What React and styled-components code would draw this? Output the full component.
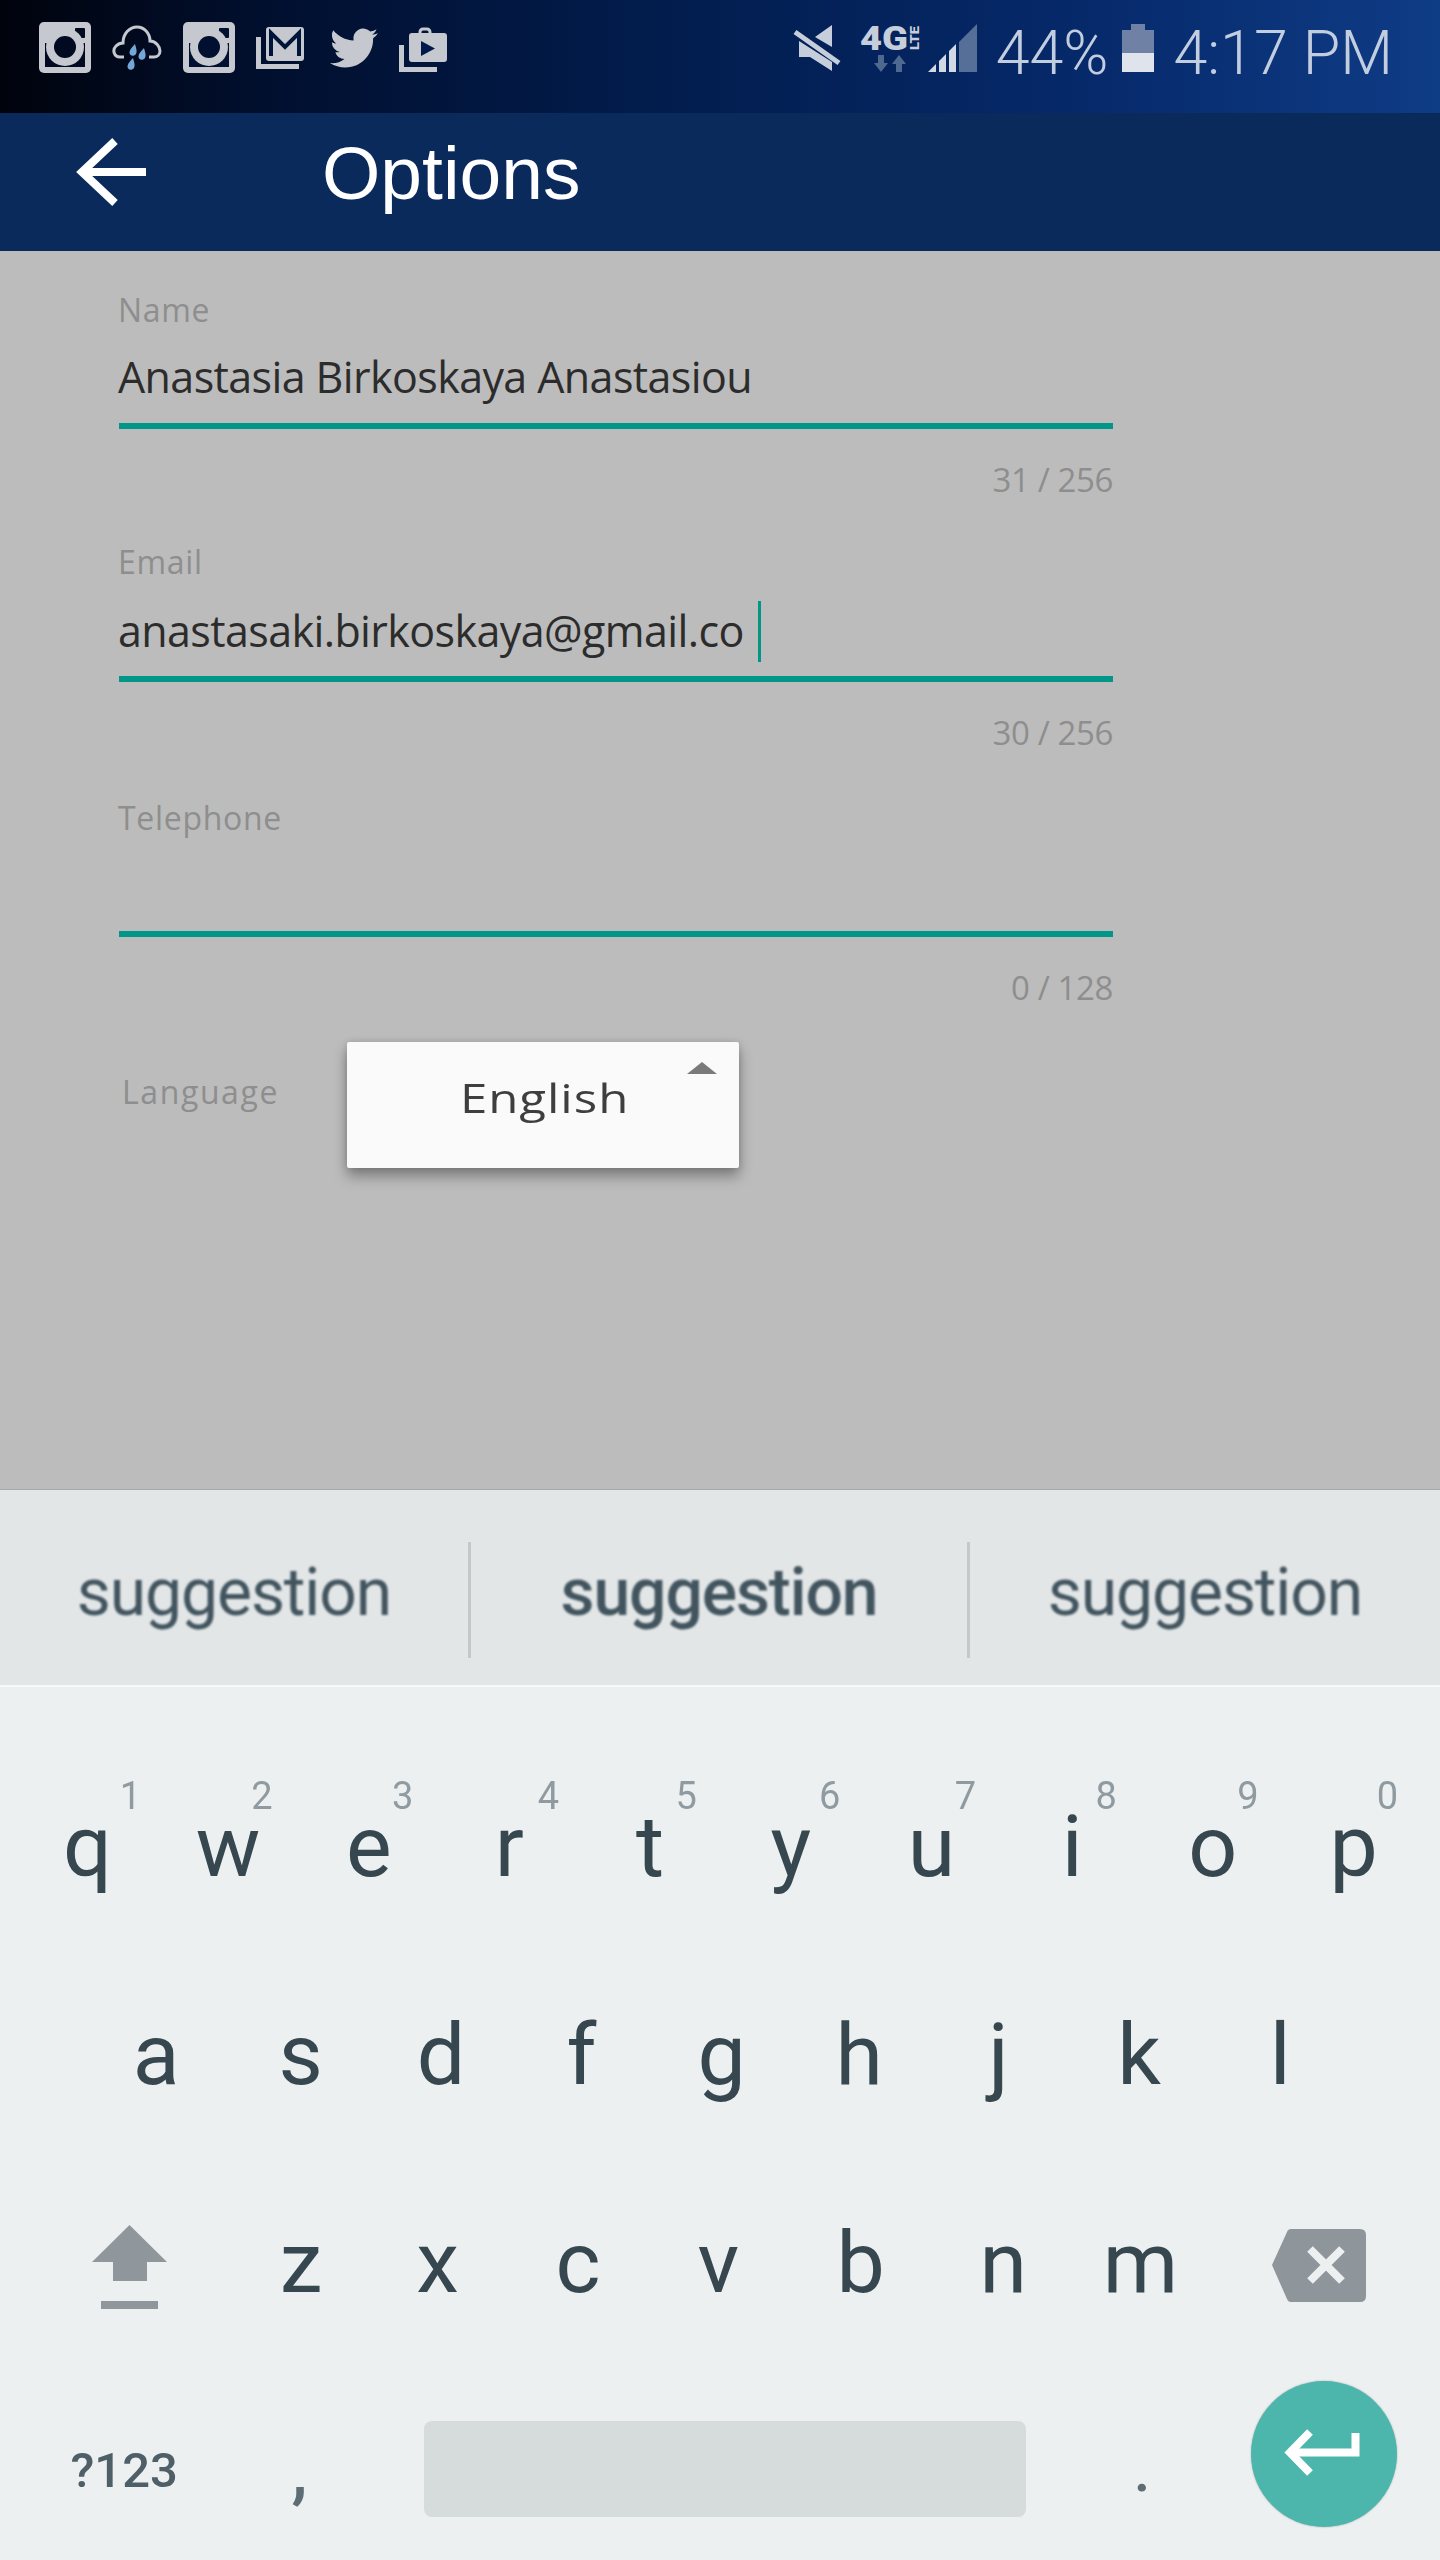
import React from "react";
import styled, { createGlobalStyle } from "styled-components";

const Global = createGlobalStyle`
  html, body { margin: 0; padding: 0; background: #ecf0f1; }
  * { box-sizing: border-box; }
`;

const Page = styled.div`
  width: 1440px;
  height: 2560px;
  overflow: hidden;
  display: flex;
  flex-direction: column;
`;

const StatusBar = styled.div`
  flex: none;
  height: 113px;
  display: flex;
  justify-content: space-between;
  padding: 22px 47px 0 39px;
  background: linear-gradient(90deg, #00030c 0%, #010f2e 18%, #021c4c 45%, #06296a 75%, #0f3c86 100%);
`;
const IconGroup = styled.div`
  display: flex;
  align-items: flex-start;
  gap: ${(p) => p.$gap}px;
`;
const Ico = styled.svg`
  display: block;
  flex: none;
  margin-top: ${(p) => p.$top || 0}px;
  margin-left: ${(p) => p.$left || 0}px;
`;
const StatusText = styled.span`
  font-family: Roboto, "Liberation Sans", sans-serif;
  font-weight: 300;
  font-size: 61px;
  line-height: 70px;
  margin-top: -4px;
  color: #c3cde0;
  white-space: nowrap;
  margin-left: ${(p) => p.$left || 0}px;
`;

const Toolbar = styled.div`
  flex: none;
  height: 138px;
  display: flex;
  align-items: center;
  padding-left: 74px;
  background: #0a2a5c;
`;
const Title = styled.h1`
  margin: 0 0 19px 176px;
  font-family: "Liberation Sans", Arial, sans-serif;
  font-weight: 400;
  font-size: 75px;
  line-height: 80px;
  color: #fff;
`;

const Main = styled.main`
  flex: none;
  height: 1239px;
  background: #bcbcbc;
  border-bottom: 1px solid #a8a9a9;
  padding: 39px 0 0 119px;
`;
const Field = styled.div`
  width: 994px;
  margin-top: ${(p) => p.$top || 0}px;
`;
const Label = styled.div`
  margin-left: -1px;
  font-family: "Open Sans", sans-serif;
  font-size: 32px;
  line-height: 40px;
  letter-spacing: 0.7px;
  color: #8e8e8e;
`;
const ValueRow = styled.div`
  height: 60px;
  margin-top: ${(p) => p.$top}px;
  display: flex;
  align-items: center;
`;
const Value = styled.span`
  margin-left: -1px;
  font-family: "Open Sans", sans-serif;
  font-size: 43px;
  line-height: 60px;
  letter-spacing: -0.6px;
  color: #2c2c2c;
  white-space: nowrap;
`;
const Caret = styled.span`
  width: 3px;
  height: 61px;
  margin-left: 14px;
  background: #009688;
`;
const Underline = styled.div`
  height: 6px;
  margin-top: ${(p) => p.$top}px;
  background: #009688;
`;
const Counter = styled.div`
  margin-top: 31px;
  font-family: "Open Sans", sans-serif;
  font-size: 33px;
  line-height: 40px;
  letter-spacing: -0.4px;
  color: #8e8e8e;
  text-align: right;
`;
const LanguageRow = styled.div`
  margin-top: 34px;
  padding-left: 3px;
  display: flex;
  align-items: flex-start;
`;
const LanguageLabel = styled(Label)`
  margin-left: 0;
  width: 225px;
  margin-top: 30px;
  letter-spacing: 1.6px;
`;
const Dropdown = styled.div`
  position: relative;
  width: 392px;
  height: 126px;
  border-radius: 2px;
  background: #fafafa;
  box-shadow: 0 8px 14px rgba(0, 0, 0, 0.35), 0 0 6px rgba(0, 0, 0, 0.12);
  padding-left: 3px;
  text-align: center;
  font-family: "Open Sans", sans-serif;
  font-size: 41px;
  line-height: 111px;
  color: #3e3e3e;
`;
const DropdownText = styled.span`
  display: inline-block;
  transform: scaleX(1.2);
  letter-spacing: 0.8px;
`;
const Triangle = styled.span`
  position: absolute;
  top: 20px;
  right: 22px;
  width: 0;
  height: 0;
  border-left: 15px solid transparent;
  border-right: 15px solid transparent;
  border-bottom: 12px solid #7a7a7a;
`;

const Suggestions = styled.div`
  flex: none;
  height: 197px;
  padding-top: 24px;
  display: flex;
  align-items: center;
  background: #e3e6e7;
  border-bottom: 2px solid #f8f9f9;
`;
const Suggestion = styled.div`
  flex: ${(p) => p.$w}px 0 0;
  padding-bottom: 14px;
  text-align: center;
  font-family: Roboto, "Liberation Sans", sans-serif;
  font-size: 66px;
  letter-spacing: -1.1px;
  font-weight: ${(p) => (p.$bold ? 500 : 400)};
  line-height: 116px;
  color: #42555f;
  filter: blur(1px);
`;
const Divider = styled.div`
  width: 3px;
  height: 116px;
  background: #c4c8c9;
`;

const Keyboard = styled.div`
  flex: none;
  height: 873px;
  overflow: hidden;
  background: #ecf0f1;
  padding-top: 56px;
`;
const Row = styled.div`
  display: flex;
  align-items: flex-start;
  height: 208px;
  padding-left: ${(p) => p.$pad}px;
  filter: blur(0.6px);
`;
const Key = styled.div`
  position: relative;
  flex: none;
  width: ${(p) => p.$w || 140.4}px;
  margin-left: ${(p) => p.$left || 0}px;
  text-align: center;
  font-family: Roboto, "Liberation Sans", sans-serif;
  font-weight: 400;
  font-size: 86px;
  line-height: 208px;
  height: 208px;
  color: #37474f;
`;
const Hint = styled.span`
  position: absolute;
  top: 34px;
  left: calc(50% + ${(p) => p.$dx}px);
  transform: translateX(-50%);
  font-size: 38px;
  line-height: 39px;
  color: #8f9ba1;
`;
const IconKey = styled.div`
  flex: none;
  margin-top: ${(p) => p.$top}px;
  margin-left: ${(p) => p.$left}px;
`;
const SymbolKey = styled(Key)`
  font-size: 49px;
  font-weight: 500;
  color: #4f5f68;
`;
const PunctKey = styled(Key)`
  font-size: ${(p) => p.$size}px;
  font-weight: 500;
  color: #5d6d75;
`;
const SpaceKey = styled.div`
  flex: none;
  width: 602px;
  height: 96px;
  margin: 54px 0 0 54px;
  border-radius: 8px;
  background: #d6dbdb;
`;
const EnterKey = styled.div`
  flex: none;
  width: 146px;
  height: 146px;
  margin: 14px 0 0 39px;
  border-radius: 50%;
  background: #4db6ac;
  box-shadow: 0 0 2px rgba(0, 0, 0, 0.3);
`;

const IG = "#c5c8cf";
const Insta = ({ dark }) => (
  <Ico width="52" height="51" viewBox="0 0 52 51">
    <rect width="52" height="51" rx="5" fill={IG} />
    <rect x="36" y="6" width="10" height="10" rx="1" fill={dark} />
    <rect x="6" y="21" width="40" height="24" fill={dark} />
    <circle cx="26" cy="25" r="19" fill={IG} />
    <circle cx="26" cy="25" r="11" fill={dark} />
  </Ico>
);
const Drop = ({ x, y }) => (
  <path d={`M${x + 2} ${y - 7}C${x + 3} ${y - 3} ${x + 4.5} ${y} ${x + 3} ${y + 3}C${x + 1} ${y + 6} ${x - 4} ${y + 5} ${x - 3.5} ${y + 1}C${x - 3} ${y - 2} ${x} ${y - 5} ${x + 2} ${y - 7}Z`} fill="#72a7d6" />
);

const dim = "#4f6890";
const keys1 = [["q", "1", 43], ["w", "2", 34], ["e", "3", 34], ["r", "4", 39], ["t", "5", 36], ["y", "6", 39], ["u", "7", 34], ["i", "8", 34], ["o", "9", 35], ["p", "0", 34]];
const keys2 = [["a", 0], ["s", 4], ["d", 0], ["f", 0], ["g", 0], ["h", -3], ["j", -1], ["k", 0], ["l", 1]];
const keys3 = [["x", -4], ["c", 0], ["v", 0], ["b", 2], ["n", 2], ["m", -3]];

export default function App() {
  return (
    <Page>
      <Global />
      <StatusBar>
        <IconGroup $gap={21}>
          <Insta dark="#010a20" />
          <Ico width="50" height="48" viewBox="0 0 50 48" $top={3}>
            <path d="M12 32H8C2 32 0 25 4 21C6 19 8 18 11 18C11 8 18 2 25 2C32 2 38 8 38 16C44 16 48 22 48 26C48 30 45 32 42 32H37" fill="none" stroke={IG} strokeWidth="3" />
            <Drop x={21} y={26} />
            <Drop x={30} y={30} />
            <Drop x={19} y={40} />
          </Ico>
          <Insta dark="#011031" />
          <Ico width="48" height="42" viewBox="0 0 48 42" $top={5}>
            <rect x="10" width="38" height="34" rx="3" fill={IG} />
            <path d="M15 29V6L29 20L43 6V29" fill="none" stroke="#01143a" strokeWidth="4" />
            <path d="M2.5 10V39.5H43" fill="none" stroke={IG} strokeWidth="5" />
          </Ico>
          <Ico width="48" height="48" viewBox="0 0 24 24" $top={2} $left={5}>
            <path fill={IG} d="M23.953 4.57a10 10 0 01-2.825.775 4.958 4.958 0 002.163-2.723c-.951.555-2.005.959-3.127 1.184a4.92 4.92 0 00-8.384 4.482C7.69 8.095 4.067 6.13 1.64 3.162a4.822 4.822 0 00-.666 2.475c0 1.71.87 3.213 2.188 4.096a4.904 4.904 0 01-2.228-.616v.06a4.923 4.923 0 003.946 4.827 4.996 4.996 0 01-2.212.085 4.936 4.936 0 004.604 3.417 9.867 9.867 0 01-6.102 2.105c-.39 0-.779-.023-1.17-.067a13.995 13.995 0 007.557 2.209c9.053 0 13.998-7.496 13.998-13.985 0-.21 0-.42-.015-.63A9.935 9.935 0 0024 4.59z" />
          </Ico>
          <Ico width="48" height="45" viewBox="0 0 48 45" $top={5}>
            <path d="M21 7V5A3 3 0 0 1 24 2H28A3 3 0 0 1 31 5V7" fill="none" stroke={IG} strokeWidth="3" />
            <rect x="10" y="6" width="38" height="29" rx="3" fill={IG} />
            <path d="M22 14L36 21.5L22 29Z" fill="#01184a" />
            <path d="M2.5 18V42.5H38" fill="none" stroke={IG} strokeWidth="5" />
          </Ico>
        </IconGroup>
        <IconGroup $gap={0}>
          <Ico width="48" height="48" viewBox="0 0 48 48" $top={2}>
            <path d="M2 8L46 39" stroke="#c7cedb" strokeWidth="5" />
            <path d="M22 13L39 1V23Z" fill="#c7cedb" />
            <path d="M6 17V33H17L39 47V38Z" fill="#c7cedb" />
          </Ico>
          <Ico width="64" height="62" viewBox="0 -12 64 62" $top={-8} $left={19}>
            <text x="0" y="24" fontFamily="Roboto, sans-serif" fontWeight="900" fontSize="33" textLength="48" lengthAdjust="spacingAndGlyphs" fill="#c7cedb">4G</text>
            <text transform="translate(59 24) rotate(-90)" fontFamily="Roboto, sans-serif" fontWeight="900" fontSize="12" textLength="24" lengthAdjust="spacingAndGlyphs" fill="#c7cedb">LTE</text>
            <path d="M18 29H24V37H28L21 46L14 37H18Z M36 46H42V38H46L39 29L32 38H36Z" fill={dim} />
          </Ico>
          <Ico width="49" height="48" viewBox="0 0 49 48" $top={2} $left={4}>
            <path d="M0 48L8 40V48Z M11 48V37L18 30V48Z M21 48V27L28 20V48Z" fill="#d3d9e4" />
            <path d="M31 48V18L49 0V48Z" fill="#566f98" />
          </Ico>
          <StatusText $left={19}>44%</StatusText>
          <Ico width="32" height="48" viewBox="0 0 32 48" $top={2} $left={14}>
            <path d="M9 0H23V6H32V29H0V6H9Z" fill="#6f82a6" />
            <rect y="29" width="32" height="19" fill="#dfe4ec" />
          </Ico>
          <StatusText $left={19}>4:17 PM</StatusText>
        </IconGroup>
      </StatusBar>

      <Toolbar>
        <Ico width="72" height="70" viewBox="0 0 72 70" $top={-20}>
          <path d="M72 35H8" stroke="#fff" strokeWidth="8" />
          <path d="M41 4L8 35L41 66" fill="none" stroke="#fff" strokeWidth="8" />
        </Ico>
        <Title>Options</Title>
      </Toolbar>

      <Main>
        <Field>
          <Label>Name</Label>
          <ValueRow $top={17}><Value>Anastasia Birkoskaya Anastasiou</Value></ValueRow>
          <Underline $top={16} />
          <Counter>31 / 256</Counter>
        </Field>
        <Field $top={42}>
          <Label>Email</Label>
          <ValueRow $top={19}><Value>anastasaki.birkoskaya@gmail.co</Value><Caret /></ValueRow>
          <Underline $top={15} />
          <Counter>30 / 256</Counter>
        </Field>
        <Field $top={45}>
          <Label>Telephone</Label>
          <ValueRow $top={16} />
          <Underline $top={17} />
          <Counter>0 / 128</Counter>
        </Field>
        <LanguageRow>
          <LanguageLabel>Language</LanguageLabel>
          <Dropdown><DropdownText>English</DropdownText><Triangle /></Dropdown>
        </LanguageRow>
      </Main>

      <Suggestions>
        <Suggestion $w={468}>suggestion</Suggestion>
        <Divider />
        <Suggestion $w={496} $bold>suggestion</Suggestion>
        <Divider />
        <Suggestion $w={470}>suggestion</Suggestion>
      </Suggestions>

      <Keyboard>
        <Row $pad={17}>
          {keys1.map(([k, n, dx]) => (
            <Key key={k} $w={140.7}>{k}<Hint $dx={dx}>{n}</Hint></Key>
          ))}
        </Row>
        <Row $pad={86}>
          {keys2.map(([k, left]) => <Key key={k} $left={left}>{k}</Key>)}
        </Row>
        <Row $pad={92}>
          <IconKey $top={66} $left={0}>
            <Ico width="75" height="84" viewBox="0 0 75 84">
              <path d="M37.5 0L75 37H55V56H21V37H0Z" fill="#8f979d" />
              <rect x="9" y="76" width="57" height="8" fill="#8f979d" />
            </Ico>
          </IconKey>
          <Key $left={64}>z</Key>
          {keys3.map(([k, left]) => <Key key={k} $left={left}>{k}</Key>)}
          <IconKey $top={70} $left={61}>
            <Ico width="94" height="73" viewBox="0 0 94 73">
              <path d="M0 36L15 3Q16 0 19 0H88Q94 0 94 6V67Q94 73 88 73H19Q16 73 15 70Z" fill="#8e969c" />
              <path d="M38 20L70 52M70 20L38 52" stroke="#ecf0f1" strokeWidth="8" />
            </Ico>
          </IconKey>
        </Row>
        <Row $pad={54}>
          <SymbolKey>?123</SymbolKey>
          <PunctKey $left={35} $size={72}>,</PunctKey>
          <SpaceKey />
          <PunctKey $left={46} $size={60}>.</PunctKey>
          <EnterKey>
            <Ico width="146" height="146" viewBox="0 0 146 146">
              <path d="M40 71.5H104.5V52" fill="none" stroke="#fff" strokeWidth="8" />
              <path d="M59 51L39 71.5L59 92" fill="none" stroke="#fff" strokeWidth="8" />
            </Ico>
          </EnterKey>
        </Row>
      </Keyboard>
    </Page>
  );
}
